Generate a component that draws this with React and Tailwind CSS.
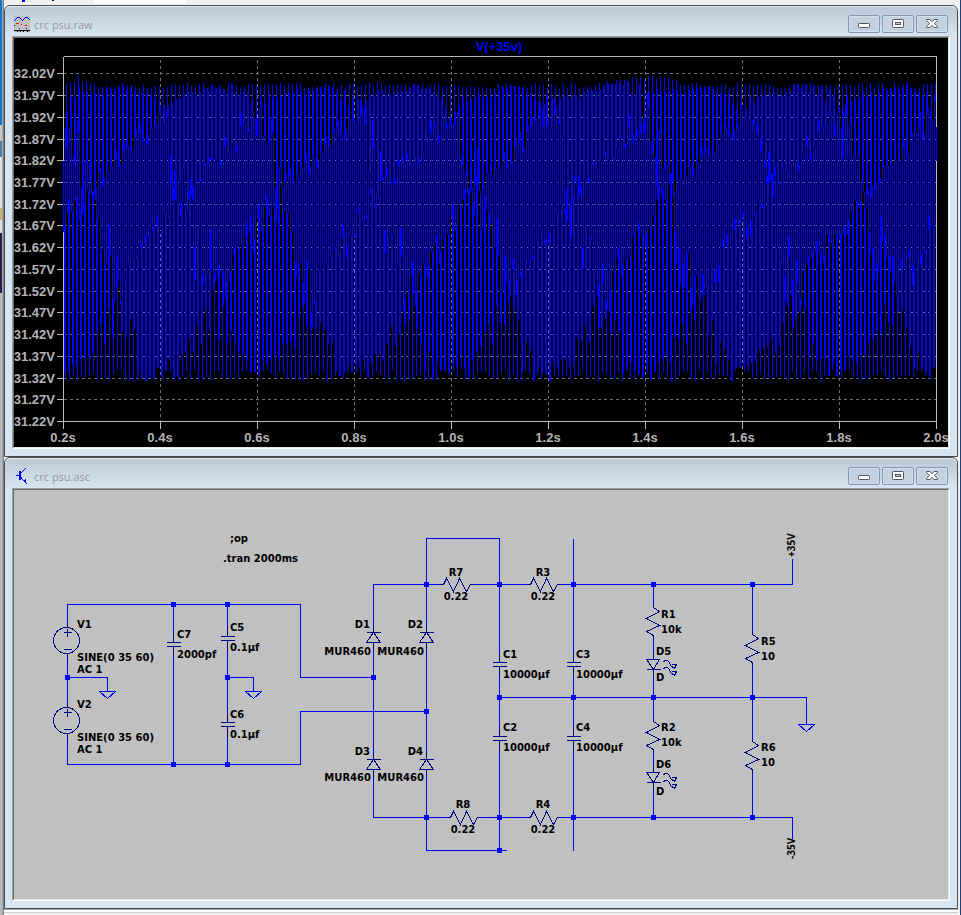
import React from "react";

const FONT_UI = "font-['Open_Sans','Noto_Sans',sans-serif]";

// ---------- PLOT DATA ----------

const GRID_X = [160, 257, 354, 451, 548, 645, 742, 839];
const GRID_Y = [
  73, 95, 117, 139, 160, 182, 204, 225, 247, 269, 291, 312, 334, 356, 378, 399,
  421,
];
const VOLTS = [
  "32.02V", "31.97V", "31.92V", "31.87V", "31.82V", "31.77V", "31.72V",
  "31.67V", "31.62V", "31.57V", "31.52V", "31.47V", "31.42V", "31.37V",
  "31.32V", "31.27V", "31.22V",
];
const TIMES = [
  "0.2s", "0.4s", "0.6s", "0.8s", "1.0s", "1.2s", "1.4s", "1.6s", "1.8s",
  "2.0s",
];

// one ripple period: [time, y]
const PERIOD = 4.0417;
const RIPPLE = [
  [0, 258], [0.08, 226], [0.2, 186], [0.34, 132], [0.44, 110], [0.55, 95],
  [0.8, 84], [1, 91], [1.2, 95], [1.34, 99], [1.44, 106], [1.54, 122],
  [1.68, 140], [1.85, 158], [2, 168], [2.2, 188], [2.41, 218], [2.6, 246],
  [2.8, 270], [3, 318], [3.25, 358], [3.5, 380], [3.65, 368], [3.84, 318],
  [PERIOD, 258],
];

const noise = (n) => {
  const s = Math.sin(n * 127.1 + 11.7) * 43758.5453;
  return (s - Math.floor(s)) * 2 - 1;
};

const rippleAt = (t) => {
  const cycle = Math.floor(t / PERIOD);
  const u = t - cycle * PERIOD;
  let i = 1;
  while (i < RIPPLE.length - 1 && RIPPLE[i][0] < u) i++;
  const [t0, y0] = RIPPLE[i - 1];
  const [t1, y1] = RIPPLE[i];
  return y0 + ((y1 - y0) * (u - t0)) / (t1 - t0);
};

// every pixel column shows the lowest and highest value inside it
const buildTrace = () => {
  let d = "";
  let last = null;
  for (let x = 63; x <= 936; x++) {
    let lo = last === null ? 999 : last;
    let hi = last === null ? 0 : last;
    const cycle = Math.floor((x - 106) / PERIOD);
    const swell = -8 * Math.exp(-(((x - 645) / 30) ** 2));
    const start = -7 * Math.exp(-(((x - 77) / 8) ** 2));
    for (let s = 1; s <= 20; s++) {
      const edge = s === 20 ? noise(x) * 0.16 : 0;
      let y = rippleAt(x - 106 + s / 20 + edge);
      if (y < 105) y += noise(cycle) * 3 + swell + start;
      if (y > 345) y += noise(cycle + 500) * 6 - 4;
      lo = Math.min(lo, y);
      hi = Math.max(hi, y);
      if (s === 20) last = y;
    }
    if (x === 63) {
      lo = 160;
      hi = 231;
    }
    if (x === 936) {
      lo = 126;
      hi = 160;
    }
    d += `M${x} ${Math.round(lo)}V${Math.round(hi)}`;
  }
  return d;
};

const TRACE = buildTrace();

// ---------- WINDOW ICONS ----------

const PlotIcon = () => (
  <svg width="16" height="16" viewBox="0 0 16 16" shapeRendering="crispEdges">
    <rect width="16" height="16" fill="#c0c0c0" />
    <path
      d="M0 4h1v1h-1zM1 3h1v1h-1zM2 2h1v1h-1zM3 1h3v1h-3zM6 2h1v1h-1zM7 3h1v1h-1zM8 4h1v1h-1zM9 3h1v1h-1zM10 2h1v1h-1zM11 1h3v1h-3zM14 2h1v1h-1zM15 3h1v1h-1zM5 12h1v1h-1zM12 12h1v1h-1z"
      fill="#0000ff"
    />
    <path d="M2 7h3v1h-3zM7 8h1v1h-1zM11 9h2v1h-2z" fill="#ff0000" />
    <path
      d="M0 9h1v1h-1zM0 14h16v1h-16zM3 15h1v1h-1zM6 15h1v1h-1zM9 15h1v1h-1zM13 15h1v1h-1z"
      fill="#000000"
    />
  </svg>
);

const SchematicIcon = () => (
  <svg width="16" height="16" viewBox="0 0 16 16" shapeRendering="crispEdges">
    <path d="M2 7h3v1h-3zM5 3h2v9h-2z" fill="#0000ff" />
    <path
      d="M7 4h1v1h-1zM8 3h1v1h-1zM9 2h1v1h-1zM10 1h1v1h-1zM11 0h1v1h-1zM7 9h1v2h-1zM8 11h1v1h-1zM9 12h3v1h-3zM10 13h2v1h-2zM11 11h1v2h-1zM11 14h1v1h-1zM12 15h1v1h-1z"
      fill="#0000ff"
    />
  </svg>
);

const MinimizeIcon = () => (
  <svg width="12" height="10" viewBox="0 0 12 10">
    <rect x="0.5" y="4.5" width="11" height="4" rx="0.8" fill="#fff" stroke="#555566" />
  </svg>
);

const RestoreIcon = () => (
  <svg width="12" height="10" viewBox="0 0 12 10">
    <rect x="0.5" y="0.5" width="11" height="8" rx="0.8" fill="#fff" stroke="#555566" />
    <rect x="3.5" y="3.5" width="5" height="2" fill="#c5d3e0" stroke="#555566" />
  </svg>
);

const CloseIcon = () => (
  <svg width="12" height="10" viewBox="0 0 12 10">
    <path
      d="M0.5 0.5H4L6 2.8L8 0.5H11.5V1.6L8.3 4.5L11.5 7.5V8.5H8L6 6.3L4 8.5H0.5V7.5L3.7 4.5L0.5 1.6Z"
      fill="#fff"
      stroke="#555566"
    />
  </svg>
);

const WindowButton = ({ label, children }) => (
  <button
    type="button"
    aria-label={label}
    className="flex h-[18px] w-8 items-center justify-center rounded-xs border border-[#8494b0] bg-[#c4d2e0] shadow-[inset_0_0_0_1px_#d3dfea] hover:bg-[#d8e5f2]"
  >
    {children}
  </button>
);

const MdiWindow = ({ title, icon, children }) => (
  <section className="rounded-t-md border border-[#4b4b4b] bg-[#d7e4f2]">
    <header className="flex h-[30px] items-start justify-between rounded-t-md border-t border-[#e6edf4] bg-linear-to-b from-[#bccad8] to-[#d7e4f2] pt-2 pr-[9px] pl-[9px]">
      <div className="flex items-start gap-1 pt-px">
        {icon}
        <h2 className={`${FONT_UI} text-[11px] leading-[18px] text-[#999999]`}>{title}</h2>
      </div>
      <div className="flex gap-0.5">
        <WindowButton label="Minimize">
          <MinimizeIcon />
        </WindowButton>
        <WindowButton label="Restore">
          <RestoreIcon />
        </WindowButton>
        <WindowButton label="Close">
          <CloseIcon />
        </WindowButton>
      </div>
    </header>
    <div className="mx-[7px] mb-[7px] border border-t-[#a0a0a0] border-r-white border-b-white border-l-[#a0a0a0]">
      <div className="border border-t-[#696969] border-r-[#e8e8e8] border-b-[#e8e8e8] border-l-[#696969]">
        {children}
      </div>
    </div>
  </section>
);

// ---------- WAVEFORM ----------

const Waveform = () => (
  <svg
    viewBox="14 38 934 409"
    className="block h-auto w-full bg-black font-['Liberation_Sans',Arial,sans-serif] text-[13px] font-bold"
    role="img"
    aria-label="V(+35v) over time"
  >
    <g transform="translate(0.5 0.5)" shapeRendering="crispEdges" fill="none">
      <g stroke="#707070" strokeDasharray="3 3">
        {GRID_Y.slice(0, -1).map((y) => (
          <path key={y} d={`M63 ${y}H936`} />
        ))}
        {GRID_X.map((x) => (
          <path key={x} d={`M${x} 59V421`} />
        ))}
      </g>
      <g stroke="#b8b8b8">
        <path d="M63 56H936V428M63 56V428M56 421H936" />
        {GRID_Y.map((y) => (
          <path key={y} d={`M56 ${y}H63`} />
        ))}
        {GRID_X.map((x) => (
          <path key={x} d={`M${x} 421V428`} />
        ))}
      </g>
      <path d={TRACE} stroke="#0000ff" />
    </g>
    <text x="499" y="51" textAnchor="middle" fill="#0000ff">
      V(+35v)
    </text>
    <g fill="#b4b4b4">
      {VOLTS.map((label, i) => (
        <text key={label} x="55" y={GRID_Y[i] + 5} textAnchor="end">
          {label}
        </text>
      ))}
      {TIMES.map((label, i) => (
        <text key={label} x={63 + i * 97} y="442" textAnchor="middle">
          {label}
        </text>
      ))}
    </g>
  </svg>
);

// ---------- SCHEMATIC ----------

const WIRES = [
  "M67 627V604H300V677H373",
  "M67 653V707M67 677H107V691",
  "M67 733V764H300V711H426",
  "M173 604V642M173 646V764",
  "M227 604V636M227 640V722M227 726V764M227 677H253V691",
  "M373 632V584H443M373 642V759M373 769V817H450",
  "M426 632V538H499V662M426 642V759M426 769V850H506",
  "M470 584H530M557 584H792V558",
  "M477 817H530M557 817H792V838",
  "M499 666V736M499 740V850",
  "M573 538V662M573 666V736M573 740V850",
  "M499 697H806V724",
  "M653 584V607M653 635V659M653 669V721M653 748V772M653 782V817",
  "M752 584V634M752 662V741M752 768V817",
];

const JUNCTIONS = [
  [67, 677], [173, 604], [173, 764], [227, 604], [227, 677], [227, 764],
  [373, 677], [426, 584], [426, 711], [426, 817], [499, 584], [499, 697],
  [499, 817], [499, 850], [573, 584], [573, 697], [573, 817], [653, 584],
  [653, 697], [653, 817], [752, 584], [752, 697], [752, 817],
];

const CAPS = [
  [173, 642], [227, 636], [227, 722], [499, 662], [499, 736], [573, 662],
  [573, 736],
];
const DIODES = [[373, 632], [426, 632], [373, 759], [426, 759]];
const LEDS = [[653, 659], [653, 772]];
const RES_H = [[443, 584], [530, 584], [450, 817], [530, 817]];
const RES_V = [[653, 607], [653, 721], [752, 634], [752, 741]];
const SOURCES = [[67, 640], [67, 720]];
const GROUNDS = [[107, 691], [253, 691], [806, 724]];

// [text, x, y, anchor]
const LABELS = [
  [";op", 230, 542],
  [".tran 2000ms", 223, 562],
  ["V1", 77, 628], ["SINE(0 35 60)", 77, 661], ["AC 1", 77, 673],
  ["V2", 77, 708], ["SINE(0 35 60)", 77, 741], ["AC 1", 77, 753],
  ["C7", 177, 638], ["2000pf", 177, 658],
  ["C5", 230, 631], ["0.1µf", 230, 651],
  ["C6", 230, 718], ["0.1µf", 230, 738],
  ["D1", 370, 628, "end"], ["MUR460", 371, 655, "end"],
  ["D2", 423, 628, "end"], ["MUR460", 424, 655, "end"],
  ["D3", 370, 755, "end"], ["MUR460", 371, 781, "end"],
  ["D4", 423, 755, "end"], ["MUR460", 424, 781, "end"],
  ["R7", 456, 576, "middle"], ["0.22", 456, 600, "middle"],
  ["R3", 543, 576, "middle"], ["0.22", 543, 600, "middle"],
  ["R8", 463, 808, "middle"], ["0.22", 463, 833, "middle"],
  ["R4", 543, 808, "middle"], ["0.22", 543, 833, "middle"],
  ["C1", 503, 658], ["10000µf", 503, 678],
  ["C2", 503, 731], ["10000µf", 503, 751],
  ["C3", 576, 658], ["10000µf", 576, 678],
  ["C4", 576, 731], ["10000µf", 576, 751],
  ["R1", 661, 618], ["10k", 661, 633],
  ["D5", 656, 655], ["D", 656, 681],
  ["R2", 661, 731], ["10k", 661, 746],
  ["D6", 656, 768], ["D", 656, 795],
  ["R5", 761, 645], ["10", 761, 660],
  ["R6", 761, 751], ["10", 761, 766],
];

const Schematic = () => (
  <svg
    viewBox="14 490 934 409"
    className="block h-auto w-full bg-[#c0c0c0] font-['DejaVu_Sans',Verdana,sans-serif] text-[10px] font-bold"
    role="img"
    aria-label="CRC power supply schematic"
  >
    <g transform="translate(0.5 0.5)" shapeRendering="crispEdges" fill="none">
      <g stroke="#0000ff">
        {WIRES.map((d) => (
          <path key={d} d={d} />
        ))}
        {GROUNDS.map(([x, y]) => (
          <path key={x} d={`M${x - 8} ${y}h16l-8 7z`} />
        ))}
      </g>

      <g stroke="#000080">
        {CAPS.map(([x, y]) => (
          <path
            key={`${x}-${y}`}
            d={`M${x - 7} ${y}h14M${x - 7} ${y + 4}h14M${x} ${y}v-10M${x} ${y + 4}v10`}
          />
        ))}
        {DIODES.map(([x, y]) => (
          <path
            key={`${x}-${y}`}
            d={`M${x - 7} ${y}h14M${x} ${y}l-7 10h14zM${x} ${y}v-7M${x} ${y + 10}v7`}
          />
        ))}
        {LEDS.map(([x, y]) => (
          <g key={y}>
            <path
              d={`M${x - 7} ${y}h13l-6 10zM${x - 7} ${y + 10}h14M${x} ${y}v-7M${x} ${y + 10}v7`}
            />
            <path
              d={`M${x + 10} ${y + 3}l1 -2h3l2 2l1 3l3 2h1M${x + 18} ${y + 5}h5l-2 4l-3 -2`}
            />
            <path
              d={`M${x + 10} ${y + 10}l1 -2h3l2 2l1 3l3 2h1M${x + 18} ${y + 12}h5l-2 4l-3 -2`}
            />
          </g>
        ))}
        {RES_H.map(([x, y]) => (
          <path key={`${x}-${y}`} d={`M${x - 4} ${y}h4l3 -6l7 13l6 -13l7 13l4 -7h3`} />
        ))}
        {RES_V.map(([x, y]) => (
          <path key={`${x}-${y}`} d={`M${x} ${y - 3}v3l6 4l-13 7l13 7l-13 6l7 4v3`} />
        ))}
        {SOURCES.map(([x, y]) => (
          <g key={y}>
            <circle cx={x - 1} cy={y} r="13" />
            <path d={`M${x - 4} ${y - 8}h8M${x} ${y - 12}v8M${x - 4} ${y + 9}h8M${x} ${y - 17}v4M${x} ${y + 13}v4`} />
          </g>
        ))}
      </g>
    </g>

    <g fill="#0000ff" shapeRendering="crispEdges">
      {JUNCTIONS.map(([x, y]) => (
        <rect key={`${x}-${y}`} x={x - 2} y={y - 2} width="5" height="5" />
      ))}
    </g>

    <g fill="#000000">
      {LABELS.map(([label, x, y, anchor]) => (
        <text key={`${x}-${y}-${label}`} x={x} y={y} textAnchor={anchor || "start"}>
          {label}
        </text>
      ))}
      <g className={FONT_UI}>
        <text transform="translate(795 557) rotate(-90)">+35V</text>
        <text transform="translate(795 859) rotate(-90)">-35V</text>
      </g>
    </g>
  </svg>
);

// ---------- APP ----------

const LeftEdge = () => (
  <div className="flex w-1 shrink-0 border-r border-[#808080]">
    <div className="flex w-0.5 flex-col">
      <div className="h-[125px] bg-[#0078d7]" />
      <div className="h-4 bg-[#c8c8c8]" />
      <div className="h-4 bg-[#4a80b0]" />
      <div className="h-[51px] bg-[#e0e0e0]" />
      <div className="h-3 bg-[#c8b070]" />
      <div className="h-[13px] bg-[#e0e0e0]" />
      <div className="h-[60px] bg-[#2a1c48]" />
      <div className="flex-1 bg-[#b4bac0]" />
    </div>
    <div className="flex-1 bg-[#a8a8a8]" />
  </div>
);

const App = () => {
  return (
    <div className="flex min-h-screen bg-[#f0f0f0]">
      <LeftEdge />
      <main className="min-w-0 flex-1">
        <div className="flex h-[5px] items-start pl-[18px]">
          <div className="h-0.5 w-[3px] bg-[#0000ff]" />
          <div className="ml-[27px] h-px w-0.5 bg-[#000080]" />
          <div className="ml-10 h-[3px] w-[92px] bg-white" />
        </div>
        <MdiWindow title="crc psu.raw" icon={<PlotIcon />}>
          <Waveform />
        </MdiWindow>
        <MdiWindow title="crc psu.asc" icon={<SchematicIcon />}>
          <Schematic />
        </MdiWindow>
        <div className="h-1 border-t border-b border-t-[#a8a8a8] border-b-[#d0d0d0] bg-white" />
      </main>
      <div className="w-[3px] shrink-0 border-r border-[#1f3f77]" />
    </div>
  );
};

export default App;
